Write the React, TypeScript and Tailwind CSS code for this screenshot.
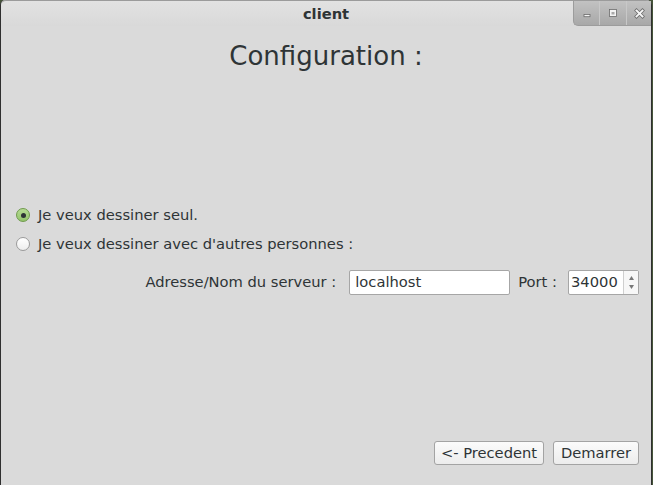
import React from "react"

const font = { fontFamily: '"DejaVu Sans", "Liberation Sans", sans-serif' }

function Radio({ checked, label }: { checked?: boolean; label: string }) {
  return (
    <label className="flex h-[22px] items-center">
      {checked ? (
        <span className="flex h-[14px] w-[14px] items-center justify-center rounded-full border border-[#6f9a4c] bg-gradient-to-b from-[#b6dc94] to-[#94c46c]">
          <span className="h-[5px] w-[5px] rounded-full bg-[#2e3436]" />
        </span>
      ) : (
        <span className="h-[14px] w-[14px] rounded-full border border-[#9a9a9a] bg-gradient-to-b from-white to-[#ededed]" />
      )}
      <span className="ml-[8px]">{label}</span>
    </label>
  )
}

function WinButton({ children, w }: { children: React.ReactNode; w: string }) {
  return (
    <div className={`${w} flex h-full items-center justify-center border-l border-[#c8c8c8] first:border-l-0`}>
      {children}
    </div>
  )
}

export default function App() {
  return (
    <div className="h-[485px] w-[653px] overflow-hidden bg-[#46553a]" style={font}>
      <div className="flex h-full w-[652px] flex-col rounded-t-[5px] border-x border-[#2f2f2f] bg-[#dadada] text-[14.7px] text-[#2e3436]">
        {/* title bar */}
        <div className="grid h-[26px] grid-cols-[1fr_auto_1fr] rounded-t-[5px] border-t border-[#9b9b9b] bg-gradient-to-b from-[#e2e2e2] to-[#d9d9d9]">
          <div />
          <div className="flex items-center pt-[1px] font-bold">client</div>
          <div className="flex justify-end">
            <div className="flex h-[25px] rounded-bl-[5px] border-b border-l border-[#9c9c9c] bg-gradient-to-b from-[#c2c2c2] to-[#a8a8a8]">
              <WinButton w="w-[25px]">
                <svg width="10" height="10" viewBox="0 0 10 10">
                  <rect x="2" y="6.5" width="6" height="2.2" fill="#f4f4f4" stroke="#6b6b6b" strokeWidth="0.8" />
                </svg>
              </WinButton>
              <WinButton w="w-[27px]">
                <svg width="10" height="10" viewBox="0 0 10 10">
                  <rect x="1.5" y="1.5" width="7" height="7" fill="#f4f4f4" stroke="#6b6b6b" strokeWidth="0.8" />
                  <rect x="3.5" y="4" width="3" height="2.5" fill="#a9a9a9" />
                </svg>
              </WinButton>
              <WinButton w="w-[25px]">
                <svg width="11" height="11" viewBox="0 0 11 11">
                  <path d="M2.5 2.5 L8.5 8.5 M8.5 2.5 L2.5 8.5" stroke="#6b6b6b" strokeWidth="3.4" strokeLinecap="square" />
                  <path d="M2.5 2.5 L8.5 8.5 M8.5 2.5 L2.5 8.5" stroke="#f6f6f6" strokeWidth="1.9" strokeLinecap="square" />
                </svg>
              </WinButton>
            </div>
          </div>
        </div>

        {/* body */}
        <div className="flex flex-1 flex-col">
          <h1 className="mt-[15px] text-center text-[26px] leading-[30px]">Configuration :</h1>

          <div className="mt-[133px] flex flex-col gap-[7px] pl-[15px]">
            <Radio checked label="Je veux dessiner seul." />
            <Radio label="Je veux dessiner avec d'autres personnes :" />
          </div>

          <div className="mt-[15px] flex h-[25px] items-center justify-end pr-[12px]">
            <span className="mr-[13px]">Adresse/Nom du serveur :</span>
            <div className="flex h-[25px] w-[161px] items-center rounded-[2px] border border-[#a6a6a6] bg-white pl-[5px]">
              localhost
            </div>
            <span className="ml-[8px] mr-[11px]">Port :</span>
            <div className="flex h-[25px] w-[71px] rounded-[2px] border border-[#a6a6a6] bg-white">
              <div className="flex flex-1 items-center pl-[2px]">34000</div>
              <div className="flex w-[15px] flex-col items-center justify-center gap-[5px] border-l border-[#cfcfcf] bg-[#f7f7f7]">
                <svg width="5" height="4" viewBox="0 0 5 4">
                  <path d="M0 4 L2.5 0 L5 4 Z" fill="#777" />
                </svg>
                <svg width="5" height="4" viewBox="0 0 5 4">
                  <path d="M0 0 L5 0 L2.5 4 Z" fill="#777" />
                </svg>
              </div>
            </div>
          </div>

          <div className="mt-auto mb-[20px] flex justify-end gap-[9px] pr-[12px]">
            <button className="h-[24px] w-[110px] rounded-[3px] border border-[#a3a3a3] bg-gradient-to-b from-[#fbfbfb] to-[#ececec] text-[#2e3436]">
              &lt;- Precedent
            </button>
            <button className="h-[24px] w-[86px] rounded-[3px] border border-[#a3a3a3] bg-gradient-to-b from-[#fbfbfb] to-[#ececec] text-[#2e3436]">
              Demarrer
            </button>
          </div>
        </div>
      </div>
    </div>
  )
}
